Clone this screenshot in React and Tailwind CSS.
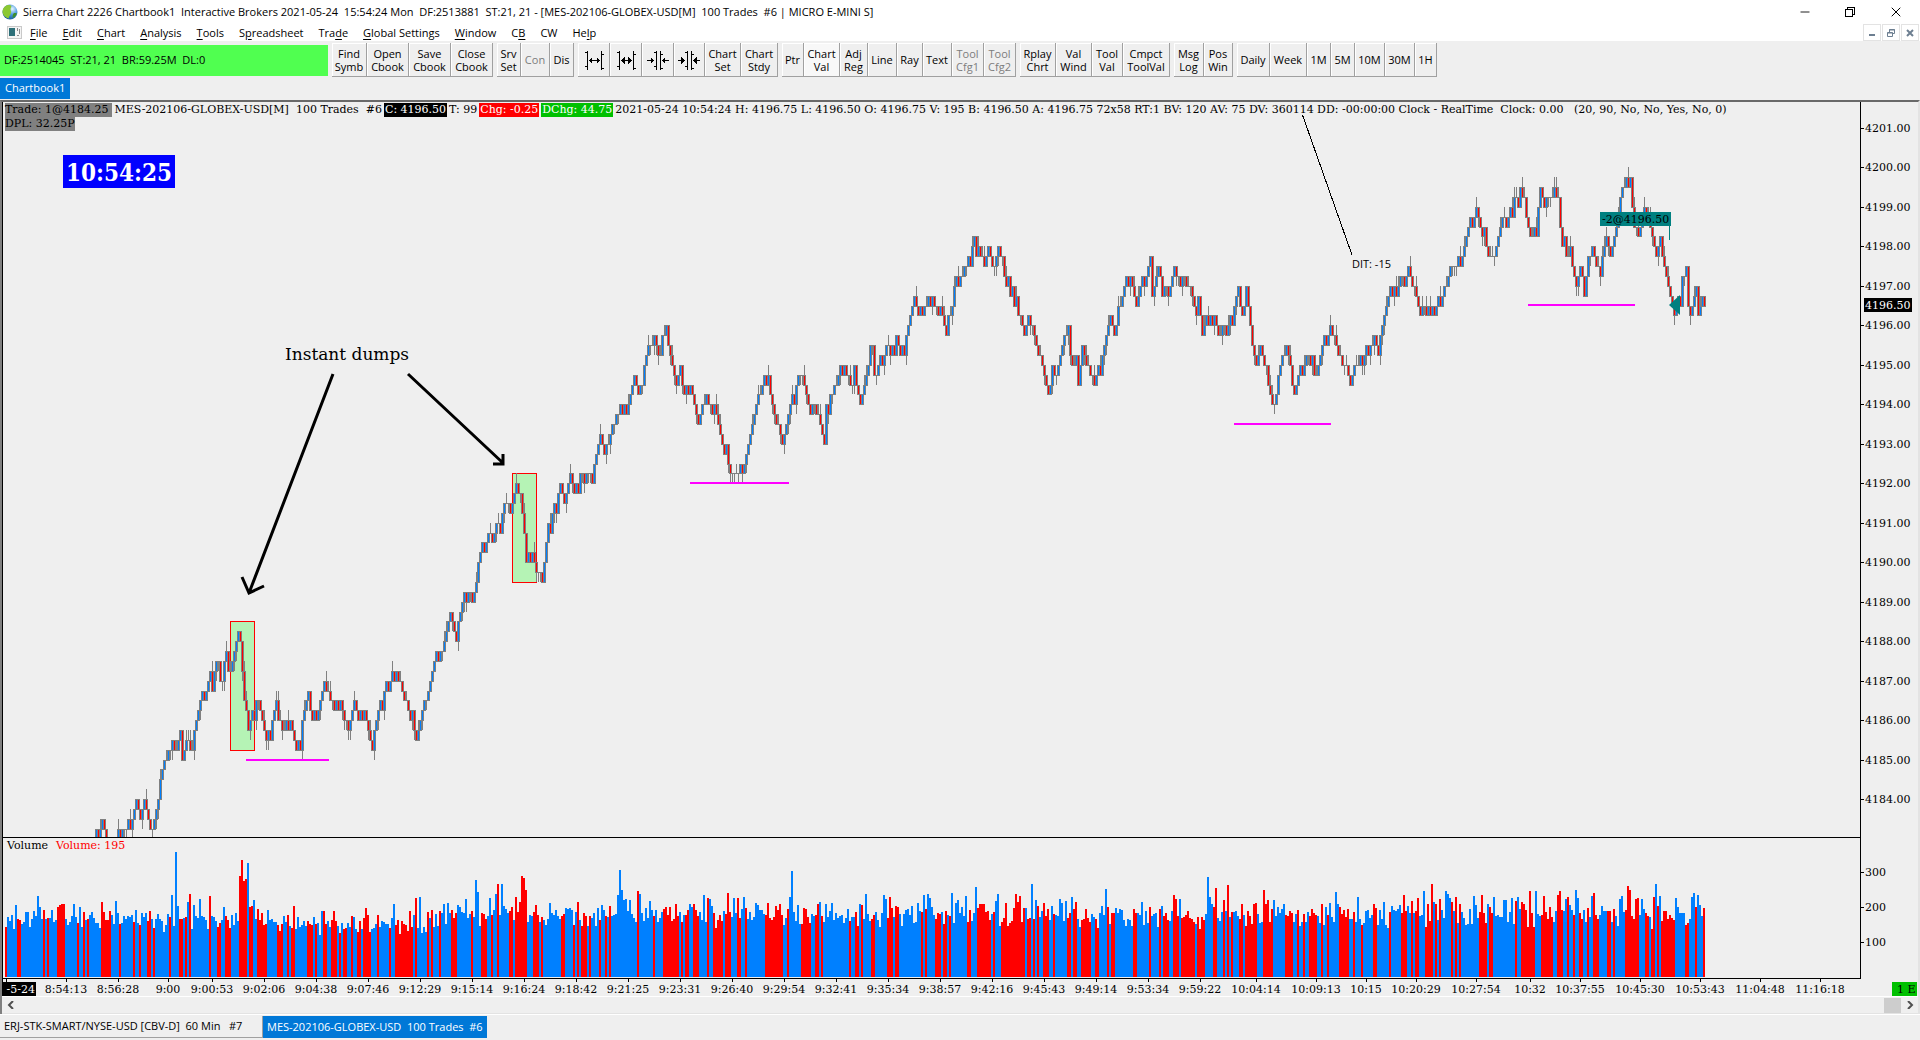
import { Minus, X } from "lucide-react";

const MENUS = [
    ["", "F", "ile"],
    ["", "E", "dit"],
    ["", "C", "hart"],
    ["", "A", "nalysis"],
    ["", "T", "ools"],
    ["S", "p", "readsheet"],
    ["Tra", "d", "e"],
    ["", "G", "lobal Settings"],
    ["", "W", "indow"],
    ["C", "B", ""],
    ["CW", "", ""],
    ["He", "l", "p"],
];

const TOOLBAR = [
    [
        { text: "Find Symb", w: "w-[35px]" },
        { text: "Open Cbook", w: "w-[42px]" },
        { text: "Save Cbook", w: "w-[42px]" },
        { text: "Close Cbook", w: "w-[42px]" },
    ],
    [
        { text: "Srv Set", w: "w-[24px]" },
        { text: "Con", w: "w-[29px]", disabled: true },
        { text: "Dis", w: "w-[24px]" },
    ],
    [
        { icon: "widen", label: "Increase bar spacing", w: "w-[32px]" },
        { icon: "widenBold", label: "Increase bar spacing more", w: "w-[32px]" },
        { icon: "narrow", label: "Decrease bar spacing", w: "w-[32px]" },
        { icon: "narrowBold", label: "Decrease bar spacing more", w: "w-[31px]" },
        { text: "Chart Set", w: "w-[36px]" },
        { text: "Chart Stdy", w: "w-[37px]" },
    ],
    [
        { text: "Ptr", w: "w-[22px]" },
        { text: "Chart Val", w: "w-[36px]", pressed: true },
        { text: "Adj Reg", w: "w-[28px]" },
        { text: "Line", w: "w-[29px]" },
        { text: "Ray", w: "w-[26px]" },
        { text: "Text", w: "w-[29px]" },
        { text: "Tool Cfg1", w: "w-[32px]", disabled: true },
        { text: "Tool Cfg2", w: "w-[32px]", disabled: true },
    ],
    [
        { text: "Rplay Chrt", w: "w-[36px]" },
        { text: "Val Wind", w: "w-[36px]" },
        { text: "Tool Val", w: "w-[31px]" },
        { text: "Cmpct ToolVal", w: "w-[47px]" },
    ],
    [
        { text: "Msg Log", w: "w-[30px]" },
        { text: "Pos Win", w: "w-[29px]" },
    ],
    [
        { text: "Daily", w: "w-[33px]" },
        { text: "Week", w: "w-[37px]" },
        { text: "1M", w: "w-[24px]" },
        { text: "5M", w: "w-[24px]" },
        { text: "10M", w: "w-[30px]" },
        { text: "30M", w: "w-[30px]" },
        { text: "1H", w: "w-[22px]" },
    ],
];

const TIMES = [
    [66, "8:54:13"], [118, "8:56:28"], [168, "9:00"], [212, "9:00:53"], [264, "9:02:06"], [316, "9:04:38"],
    [368, "9:07:46"], [420, "9:12:29"], [472, "9:15:14"], [524, "9:16:24"], [576, "9:18:42"], [628, "9:21:25"],
    [680, "9:23:31"], [732, "9:26:40"], [784, "9:29:54"], [836, "9:32:41"], [888, "9:35:34"], [940, "9:38:57"],
    [992, "9:42:16"], [1044, "9:45:43"], [1096, "9:49:14"], [1148, "9:53:34"], [1200, "9:59:22"], [1256, "10:04:14"],
    [1316, "10:09:13"], [1366, "10:15"], [1416, "10:20:29"], [1476, "10:27:54"], [1530, "10:32"], [1580, "10:37:55"],
    [1640, "10:45:30"], [1700, "10:53:43"], [1760, "11:04:48"], [1820, "11:16:18"],
];

// swing points of the session, x / y in chart units
const SWINGS = [
    [90, 860], [97, 828], [103, 822], [106, 845], [114, 845], [118, 835], [126, 832], [130, 822], [137, 803], [143, 815],
    [147, 810], [150, 828], [155, 820], [160, 780], [165, 760], [172, 752], [178, 745], [180, 733], [182, 760], [185, 742],
    [192, 748], [196, 720], [203, 703], [207, 684], [212, 687], [217, 655], [221, 690], [225, 655], [229, 672], [233, 668],
    [236, 643], [240, 643], [243, 690], [248, 730], [251, 710], [254, 715], [257, 700], [262, 722], [266, 742], [271, 728],
    [275, 712], [280, 725], [285, 731], [291, 727], [295, 750], [300, 740], [305, 705], [308, 693], [312, 725], [316, 715],
    [323, 685], [330, 688], [334, 712], [341, 705], [348, 728], [355, 705], [360, 715], [366, 725], [371, 742], [377, 722],
    [383, 700], [388, 682], [401, 686], [406, 705], [411, 725], [418, 730], [424, 705], [428, 695], [432, 670], [440, 655],
    [446, 635], [450, 614], [456, 630], [462, 608], [470, 593], [473, 603], [477, 575], [481, 545], [485, 553], [489, 533],
    [493, 543], [497, 515], [500, 530], [503, 505], [511, 510], [515, 485], [520, 492], [523, 524], [527, 573], [530, 555],
    [535, 563], [540, 573], [545, 563], [547, 530], [553, 508], [560, 490], [565, 503], [570, 475], [575, 493], [580, 475],
    [585, 484], [592, 470], [598, 445], [600, 436], [605, 443], [612, 438], [617, 415], [620, 405], [628, 405], [635, 387],
    [640, 393], [644, 370], [648, 350], [655, 348], [660, 352], [663, 328], [667, 345], [673, 370], [680, 372], [683, 395],
    [688, 382], [692, 400], [697, 425], [701, 408], [710, 410], [715, 415], [720, 437], [727, 460], [732, 474], [742, 468],
    [747, 455], [753, 420], [760, 393], [765, 378], [768, 387], [774, 415], [782, 440], [787, 430], [791, 408], [797, 376],
    [803, 380], [808, 410], [815, 410], [820, 425], [823, 442], [826, 410], [830, 397], [838, 376], [848, 376], [851, 395],
    [854, 366], [859, 405], [867, 380], [871, 338], [875, 385], [880, 360], [885, 350], [893, 350], [897, 338], [900, 352],
    [905, 343], [912, 310], [922, 308], [930, 298], [940, 310], [945, 325], [951, 315], [955, 282], [960, 277], [966, 265],
    [972, 250], [980, 256], [990, 255], [994, 265], [997, 250], [1001, 250], [1005, 280], [1010, 295], [1017, 308], [1022, 328],
    [1032, 330], [1037, 350], [1042, 362], [1048, 393], [1052, 370], [1056, 380], [1061, 350], [1067, 330], [1071, 365], [1075, 362],
    [1078, 383], [1082, 350], [1090, 373], [1100, 370], [1105, 345], [1110, 320], [1115, 330], [1118, 305], [1123, 298], [1130, 280],
    [1137, 303], [1145, 282], [1150, 270], [1152, 295], [1158, 270], [1162, 293], [1165, 280], [1170, 300], [1173, 270], [1183, 280],
    [1190, 290], [1195, 305], [1198, 300], [1202, 335], [1208, 325], [1213, 310], [1218, 335], [1225, 322], [1232, 322], [1238, 290],
    [1241, 318], [1244, 305], [1246, 290], [1250, 330], [1256, 370], [1260, 358], [1265, 363], [1270, 395], [1273, 412], [1277, 385],
    [1282, 360], [1286, 350], [1290, 370], [1294, 392], [1300, 370], [1308, 357], [1316, 380], [1321, 352], [1327, 333], [1335, 337],
    [1343, 365], [1347, 372], [1357, 370], [1363, 362], [1372, 345], [1378, 353], [1384, 315], [1388, 300], [1395, 298], [1400, 280],
    [1413, 280], [1420, 310], [1425, 300], [1431, 315], [1440, 303], [1447, 283], [1455, 265], [1462, 255], [1469, 230], [1477, 208],
    [1480, 225], [1487, 255], [1495, 252], [1503, 218], [1510, 212], [1515, 200], [1522, 190], [1526, 215], [1530, 235], [1535, 237],
    [1540, 190], [1550, 200], [1558, 200], [1562, 250], [1570, 255], [1576, 285], [1580, 268], [1584, 293], [1588, 260], [1594, 262],
    [1600, 275], [1605, 240], [1611, 255], [1615, 235], [1620, 200], [1625, 180], [1630, 190], [1634, 225], [1638, 235], [1644, 208],
    [1650, 225], [1655, 255], [1660, 250], [1663, 265], [1668, 285], [1673, 313], [1680, 305], [1682, 280], [1686, 280], [1689, 325],
    [1695, 290], [1698, 312], [1702, 300], [1706, 300],
];

// [first bar, last bar] of every run of down volume
const DOWN_RUNS = [
    [0, 0], [6, 7], [19, 19], [21, 21], [26, 29], [36, 36], [39, 39], [41, 41], [48, 52], [57, 57], [64, 64], [67, 67],
    [71, 72], [74, 74], [82, 82], [87, 88], [90, 90], [92, 92], [102, 102], [106, 107], [110, 112], [117, 120], [122, 123],
    [126, 130], [136, 138], [141, 141], [143, 144], [151, 153], [155, 155], [159, 160], [163, 165], [167, 167], [169, 170],
    [173, 173], [176, 177], [179, 182], [186, 186], [192, 192], [195, 203], [205, 205], [211, 211], [213, 213], [217, 217],
    [223, 225], [233, 233], [238, 240], [243, 243], [246, 246], [252, 253], [255, 260], [264, 266], [268, 268], [278, 279],
    [284, 284], [286, 286], [288, 290], [292, 292], [297, 297], [300, 300], [302, 302], [316, 316], [324, 324], [329, 336],
    [338, 338], [340, 341], [344, 346], [351, 351], [354, 358], [360, 362], [366, 367], [370, 370], [380, 388], [391, 391],
    [398, 402], [405, 406], [408, 408], [422, 422], [425, 426], [428, 428], [433, 434], [441, 443], [445, 446], [458, 458],
    [460, 460], [465, 467], [469, 470], [472, 472], [481, 482], [486, 492], [494, 494], [498, 509], [511, 512], [514, 514],
    [516, 516], [519, 521], [524, 524], [531, 532], [534, 535], [538, 542], [545, 546], [551, 551], [553, 554], [564, 565],
    [572, 572], [577, 577], [579, 581], [584, 586], [588, 594], [596, 599], [604, 605], [609, 609], [611, 611], [613, 613],
    [617, 618], [620, 625], [629, 633], [640, 643], [646, 646], [649, 649], [652, 655], [658, 658], [661, 661], [667, 671],
    [674, 674], [678, 678], [684, 685], [692, 692], [698, 700], [703, 703], [705, 706], [710, 713], [715, 715], [717, 717],
    [723, 723], [725, 725], [727, 727], [737, 740], [742, 743], [755, 755], [758, 764], [768, 773], [776, 778], [781, 781],
    [784, 784], [787, 788], [791, 791], [794, 796], [801, 802], [804, 804], [810, 816], [820, 821], [823, 824], [826, 826],
    [828, 834], [840, 841], [845, 845], [849, 849],
];

// bars that stand out of the usual 140-200 band
const PEAKS = {
    16: 81, 17: 70, 28: 73, 29: 73, 48: 75, 55: 76, 83: 82, 85: 125, 91: 75, 92: 83, 97: 78, 102: 81, 117: 101, 118: 117,
    119: 96, 120: 98, 121: 114, 122: 70, 123: 71, 124: 77, 144: 71, 159: 66, 180: 69, 194: 73, 205: 79, 207: 80, 219: 73,
    221: 74, 230: 78, 235: 97, 236: 85, 242: 79, 245: 83, 248: 93, 246: 93, 255: 80, 257: 75, 258: 101, 259: 99, 260: 87,
    286: 75, 306: 82, 307: 107, 308: 87, 309: 77, 310: 78, 312: 77, 316: 86, 317: 83, 322: 76, 335: 73, 344: 73, 349: 82,
    351: 79, 352: 78, 361: 84, 364: 79, 366: 79, 369: 80, 375: 74, 392: 80, 393: 106, 396: 72, 430: 83, 439: 82, 440: 78,
    442: 80, 459: 82, 461: 83, 462: 79, 473: 84, 476: 77, 480: 81, 485: 90, 487: 73, 488: 73, 489: 73, 496: 83, 500: 74,
    505: 83, 507: 81, 513: 93, 515: 77, 527: 78, 533: 80, 535: 75, 550: 88, 568: 75, 584: 82, 585: 78, 587: 78, 601: 100,
    602: 80, 603: 73, 605: 89, 609: 77, 611: 92, 618: 73, 624: 73, 625: 74, 629: 87, 631: 77, 634: 77, 658: 73, 665: 85,
    666: 73, 676: 80, 684: 73, 699: 82, 703: 76, 706: 79, 709: 86, 711: 73, 713: 93, 715: 73, 717: 78, 720: 86, 721: 83,
    722: 79, 725: 80, 734: 81, 738: 82, 744: 80, 749: 77, 750: 77, 753: 79, 755: 76, 756: 80, 762: 86, 765: 86, 769: 81,
    776: 82, 777: 86, 780: 78, 781: 80, 785: 87, 786: 79, 793: 81, 794: 84, 807: 78, 808: 81, 811: 91, 812: 87, 815: 78,
    816: 79, 818: 78, 824: 80, 825: 93, 827: 81, 835: 79, 843: 80, 844: 84, 846: 82, 849: 69,
};

const BARS = 850;
const TICK = 9.87;
const tickY = (t) => Math.round(168.4 + t * TICK);

function random(seed) {
    let s = seed;
    return () => {
        s = (s * 1664525 + 1013904223) % 4294967296;
        return s / 4294967296;
    };
}

function buildCandles() {
    const rnd = random(77);
    let gray = "", up = "", down = "";
    let k = 0;
    let prev = Math.round((860 - 168.4) / TICK);
    for (let i = 42; i < BARS; i++) {
        const x = 6 + i * 2;
        while (k < SWINGS.length - 2 && SWINGS[k + 1][0] < x) k++;
        const [x0, y0] = SWINGS[k];
        const [x1, y1] = SWINGS[k + 1];
        const y = y0 + ((y1 - y0) * (x - x0)) / (x1 - x0);
        let close = Math.round((y - 168.4) / TICK);
        if (close === prev && rnd() < 0.6) close += rnd() < 0.5 ? 1 : -1;
        const top = Math.min(prev, close);
        const bottom = Math.max(prev, close);
        const a = tickY(top), b = tickY(bottom);
        gray += `M${x - 1} ${a}h3v${b - a + 1}h-3z`;
        if (b > a) {
            const body = `M${x} ${a + 1}h1v${b - a - 1}h-1z`;
            if (close < prev) up += body;
            else down += body;
        }
        const r = rnd();
        const limit = b === a ? 0.5 : 0.16;
        if (r < limit) gray += `M${x} ${tickY(top - 1)}h1V${a}h-1z`;
        else if (r > 1 - limit) gray += `M${x} ${b}h1V${tickY(bottom + 1)}h-1z`;
        prev = close;
    }
    return { gray, up, down };
}

function buildVolume() {
    const rnd = random(9);
    let up = "", down = "";
    let run = 0;
    for (let i = 0; i < BARS; i++) {
        while (run < DOWN_RUNS.length - 1 && DOWN_RUNS[run][1] < i) run++;
        const isDown = i >= DOWN_RUNS[run][0] && i <= DOWN_RUNS[run][1];
        const mid = i < 130 ? 60 : i < 215 ? 54 : 62;
        const h = PEAKS[i] || Math.round(mid + (rnd() + rnd() - 1) * 15);
        const bar = `M${5 + i * 2} ${978 - h}h2v${h}h-2z`;
        if (isDown) down += bar;
        else up += bar;
    }
    return { up, down };
}

const candles = buildCandles();
const volume = buildVolume();

function SpacingIcon({ kind }) {
    const bold = kind.endsWith("Bold");
    const wide = kind.startsWith("widen");
    return (
        <svg width="22" height="22" viewBox="0 0 22 22" fill="none" stroke="black" shapeRendering="crispEdges">
            {wide ? (
                <>
                    <path d="M4.5 2v19M18.5 2v19M2 3.5h2M2 17.5h2M19 5.5h2M19 19.5h2" />
                    <path d="M6 11.5h11M8.5 9v5M7.5 10v3M14.5 9v5M15.5 10v3" />
                    {bold && <path d="M7 10.5h2M7 12.5h2M14 10.5h2M14 12.5h2M9.5 8v7M13.5 8v7" />}
                </>
            ) : (
                <>
                    <path d="M9.5 2v19M13.5 2v19M7 3.5h2M7 17.5h2M14 5.5h2M14 19.5h2" />
                    <path d="M0 11.5h7M4.5 9v5M5.5 10v3M15 11.5h7M17.5 9v5M16.5 10v3" />
                    {bold && <path d="M4 10.5h2M4 12.5h2M16 10.5h2M16 12.5h2M3.5 8v7M18.5 8v7" />}
                </>
            )}
        </svg>
    );
}

function GlobeIcon() {
    return (
        <svg width="16" height="16" viewBox="0 0 16 16">
            <defs>
                <radialGradient id="globe" cx="0.65" cy="0.3" r="0.8">
                    <stop offset="0" stopColor="#e8f6ff" />
                    <stop offset="0.45" stopColor="#4d9be0" />
                    <stop offset="1" stopColor="#0b4f8f" />
                </radialGradient>
            </defs>
            <circle cx="8" cy="8" r="7.5" fill="url(#globe)" />
            <path d="M3 2.5C5 .6 8 .6 9 1.5c1 1.5-.5 2-.5 3.5s1 2 .5 4-2 3-2.5 5.5C3.5 13.5.5 11 .5 7.5c0-2 1-3.8 2.5-5z" fill="#8cc832" />
            <path d="M11.5 9.5c1-.8 2.5-.5 3.3-.2-.6 2.2-2 3.9-4 4.7-.3-1.5-.3-3.5.7-4.5z" fill="#3f8f2a" />
        </svg>
    );
}

function ToolButton({ item }) {
    return (
        <button
            type="button"
            disabled={item.disabled}
            aria-pressed={item.pressed}
            aria-label={item.label}
            className={`${item.w} flex h-[34px] shrink-0 items-center justify-center border-r border-b border-[#a0a0a0] text-center leading-[13px] shadow-[inset_1px_1px_0_#fff] ${
                item.pressed ? "bg-[#f8f8f8]" : "bg-[#efefef]"
            } ${item.disabled ? "text-[#7d7d7d]" : "text-black"}`}
        >
            {item.icon ? <SpacingIcon kind={item.icon} /> : item.text}
        </button>
    );
}

function TitleBar() {
    return (
        <div className="flex h-6 items-center justify-between bg-white pl-[2px] pr-4">
            <div className="flex items-center gap-[5px]">
                <GlobeIcon />
                <h1 className="whitespace-pre">
                    Sierra Chart 2226 Chartbook1  Interactive Brokers 2021-05-24  15:54:24 Mon  DF:2513881  ST:21, 21 - [MES-202106-GLOBEX-USD[M]  100 Trades  #6 | MICRO E-MINI S]
                </h1>
            </div>
            <div className="flex items-center gap-8">
                <button type="button" aria-label="Minimize"><Minus className="size-3.5" strokeWidth={1.5} /></button>
                <button type="button" aria-label="Restore">
                    <svg width="12" height="12" viewBox="0 0 12 12" fill="none" stroke="black" shapeRendering="crispEdges">
                        <path d="M1.5 3.5h7v7h-7zM3.5 3V1.5h7v7H9" />
                    </svg>
                </button>
                <button type="button" aria-label="Close"><X className="size-4" strokeWidth={1.5} /></button>
            </div>
        </div>
    );
}

function MenuBar() {
    return (
        <nav className="flex h-[17px] items-center bg-white pl-[7px] pr-px">
            <svg width="15" height="13" viewBox="0 0 15 13" className="mr-2 shrink-0" shapeRendering="crispEdges">
                <path d="M0 0h15v13H0z" fill="#c9c9c9" />
                <path d="M1 1h13v11H1z" fill="#f4f4f4" />
                <path d="M2 2h6v8H2z" fill="#2d6f78" />
                <path d="M10 2h1v3h-1zM12 3h1v5h-1zM10 9h2v1h-2z" fill="#8b8b8b" />
            </svg>
            <div className="flex flex-1 gap-[15px]">
                {MENUS.map(([a, b, c]) => (
                    <button key={a + b + c} type="button" className="whitespace-pre leading-4">
                        {a}<span className="underline underline-offset-2">{b}</span>{c}
                    </button>
                ))}
            </div>
            <div className="flex gap-px">
                <button type="button" aria-label="Minimize chart" className="flex h-[17px] w-[18px] items-center justify-center border border-[#e3e3e3]">
                    <svg width="8" height="8" viewBox="0 0 8 8"><path d="M1 5h6v2H1z" fill="#6d7f91" /></svg>
                </button>
                <button type="button" aria-label="Restore chart" className="flex h-[17px] w-[18px] items-center justify-center border border-[#e3e3e3]">
                    <svg width="8" height="8" viewBox="0 0 8 8" fill="none" stroke="#6d7f91"><path d="M.5 3.5h5v4h-5zM.5 4h5M2.5 3V.5h5v4H6M2 1h6" /></svg>
                </button>
                <button type="button" aria-label="Close chart" className="flex h-[17px] w-[18px] items-center justify-center border border-[#e3e3e3]">
                    <svg width="8" height="8" viewBox="0 0 8 8" stroke="#6d7f91" strokeWidth="2"><path d="M1 1l6 6M7 1L1 7" /></svg>
                </button>
            </div>
        </nav>
    );
}

function ChartHeader() {
    return (
        <div className="absolute left-0 top-0 pt-px pl-[2px] text-[11px] leading-[14px] whitespace-pre">
            <div className="flex gap-[2px]">
                <span className="bg-[#808080] pr-1">Trade: 1@4184.25</span>
                <span>MES-202106-GLOBEX-USD[M]  100 Trades  #6</span>
                <span className="bg-black px-px text-white">C: 4196.50</span>
                <span>T: 99</span>
                <span className="bg-[#ff0000] px-px text-white">Chg: -0.25</span>
                <span className="bg-[#00c000] px-px text-white">DChg: 44.75</span>
                <span>2021-05-24 10:54:24 H: 4196.75 L: 4196.50 O: 4196.75 V: 195 B: 4196.50 A: 4196.75 72x58 RT:1 BV: 120 AV: 75 DV: 360114 DD: -00:00:00 Clock - RealTime  Clock: 0.00   (20, 90, No, No, Yes, No, 0)</span>
            </div>
            <span className="inline-block bg-[#808080]">DPL: 32.25P</span>
        </div>
    );
}

function Chart() {
    return (
        <svg viewBox="3 103 1915 894" className="block h-auto w-full" role="img" aria-label="Price and volume chart">
            <g shapeRendering="crispEdges">
                <path d="M230.5 622.5h24v129h-24zM512.5 474.5h24v109h-24z" fill="#b5f3b5" stroke="#ff0000" />
                <clipPath id="pricePane"><path d="M3 103h1857v735H3z" /></clipPath>
                <g clipPath="url(#pricePane)">
                    <path d={candles.gray} fill="#808080" />
                    <path d={candles.up} fill="#0080ff" />
                    <path d={candles.down} fill="#ff0000" />
                </g>
                <path d="M246 761h83M690 484h99M1234 425h97M1528 306h107" stroke="#ff00ff" strokeWidth="2" />
                <path d={volume.up} fill="#0080ff" />
                <path d={volume.down} fill="#ff0000" />
                <path d="M3 838.5h1857M3 979.5h1858M1860.5 103v877" stroke="black" fill="none" />
                <path d="M1302.5 116L1352 256" stroke="black" />
                <path d="M6.5 980v3" stroke="black" />
                {TIMES.map(([x]) => <path key={x} d={`M${x}.5 980v3`} stroke="black" />)}
            </g>

            {/* arrows of the annotation */}
            <g stroke="black" strokeWidth="3" fill="none">
                <path d="M333 375L249 594M242 578l7 16 15-7" />
                <path d="M408 375l95 89M503 455v10h-10" />
            </g>

            {/* filled order */}
            <path d="M1600 213h71v14h-71z" fill="#008080" />
            <path d="M1669.5 227v14" stroke="#008080" />
            <path d="M1669 306l11-10v20z" fill="#008080" />

            <g className="font-['DejaVu_Serif',serif] text-[11px]">
                <text x="1602" y="224">-2@4196.50</text>
                {Array.from({ length: 18 }, (_, i) => {
                    const y = Math.round(168.4 + (i - 1) * 39.48);
                    return (
                        <g key={i}>
                            <path d={`M1861 ${y}.5h3`} stroke="black" />
                            <text x="1865" y={y + 4}>{4201 - i}.00</text>
                        </g>
                    );
                })}
                <path d="M1864 299h48v14h-48z" />
                <text x="1865" y="310" fill="white">4196.50</text>
                {[300, 200, 100].map((v) => (
                    <g key={v}>
                        <path d={`M1861 ${978.5 - v * 0.35}h3`} stroke="black" />
                        <text x="1865" y={982 - v * 0.35}>{v}</text>
                    </g>
                ))}
                {TIMES.map(([x, t]) => <text key={x} x={x} y="994" textAnchor="middle">{t}</text>)}
                <path d="M3 983h33v14H3z" />
                <text x="35" y="994" fill="white" textAnchor="end">-5-24</text>
                <path d="M1892 983h25v14h-25z" fill="#00c000" />
                <text x="1897" y="994">1 E</text>
                <text x="7" y="850">Volume</text>
                <text x="56" y="850" fill="#ff0000">Volume: 195</text>
            </g>
            <text x="285" y="361" className="font-['DejaVu_Serif',serif] text-[17px]">Instant dumps</text>
            <path d="M63 156h112v33H63z" fill="#0000ff" />
            <text x="119" y="182" textAnchor="middle" fill="white" className="font-['DejaVu_Serif_Condensed','DejaVu_Serif',serif] text-[24px] font-bold">10:54:25</text>
            <text x="1352" y="269" className="text-[11px]">DIT: -15</text>
        </svg>
    );
}

export default function App() {
    return (
        <div className="flex min-h-screen flex-col overflow-x-hidden bg-[#efefef] font-['Open_Sans','Noto_Sans',sans-serif] text-[11px] text-black">
            <TitleBar />
            <MenuBar />

            <div className="flex items-start gap-1 pt-[2px]">
                <div className="flex h-[34px] w-[328px] shrink-0 items-center bg-[#efefef]">
                    <p className="flex h-[31px] w-full items-center whitespace-pre bg-[#50ff50] pl-1">DF:2514045  ST:21, 21  BR:59.25M  DL:0</p>
                </div>
                {TOOLBAR.map((group, i) => (
                    <div key={i} className="flex">
                        {group.map((item) => <ToolButton key={item.text || item.icon} item={item} />)}
                    </div>
                ))}
            </div>

            <div className="flex pt-px">
                <button type="button" className="h-[21px] bg-[#0078d7] px-[5px] text-white">Chartbook1</button>
            </div>

            <main className="mt-px border-t-2 border-l-2 border-r-2 border-t-[#696969] border-l-[#808080] border-r-[#e3e3e3]">
                <div className="relative border-l border-black font-['DejaVu_Serif',serif]">
                    <ChartHeader />
                    <div className="font-['Open_Sans','Noto_Sans',sans-serif]">
                        <Chart />
                    </div>
                </div>
                <div className="flex h-[18px] items-center justify-between border-t border-b border-t-white border-b-[#e3e3e3]">
                    <button type="button" aria-label="Scroll left" className="flex w-[18px] justify-center">
                        <svg width="8" height="8" viewBox="0 0 8 8" fill="none" stroke="#505050" strokeWidth="2"><path d="M6 0L2 4l4 4" /></svg>
                    </button>
                    <div className="flex h-full items-center">
                        <div className="h-[15px] w-[17px] bg-[#cdcdcd]" />
                        <button type="button" aria-label="Scroll right" className="flex w-[17px] justify-center">
                            <svg width="8" height="8" viewBox="0 0 8 8" fill="none" stroke="#505050" strokeWidth="2"><path d="M2 0l4 4-4 4" /></svg>
                        </button>
                    </div>
                </div>
            </main>

            <div className="flex border-t border-white pt-px">
                <button type="button" className="h-[22px] w-[263px] whitespace-pre border-r border-b border-[#a0a0a0] px-1 text-left">ERJ-STK-SMART/NYSE-USD [CBV-D]  60 Min   #7</button>
                <button type="button" className="h-[22px] whitespace-pre bg-[#0078d7] px-1 text-white">MES-202106-GLOBEX-USD  100 Trades  #6</button>
            </div>
        </div>
    );
}
